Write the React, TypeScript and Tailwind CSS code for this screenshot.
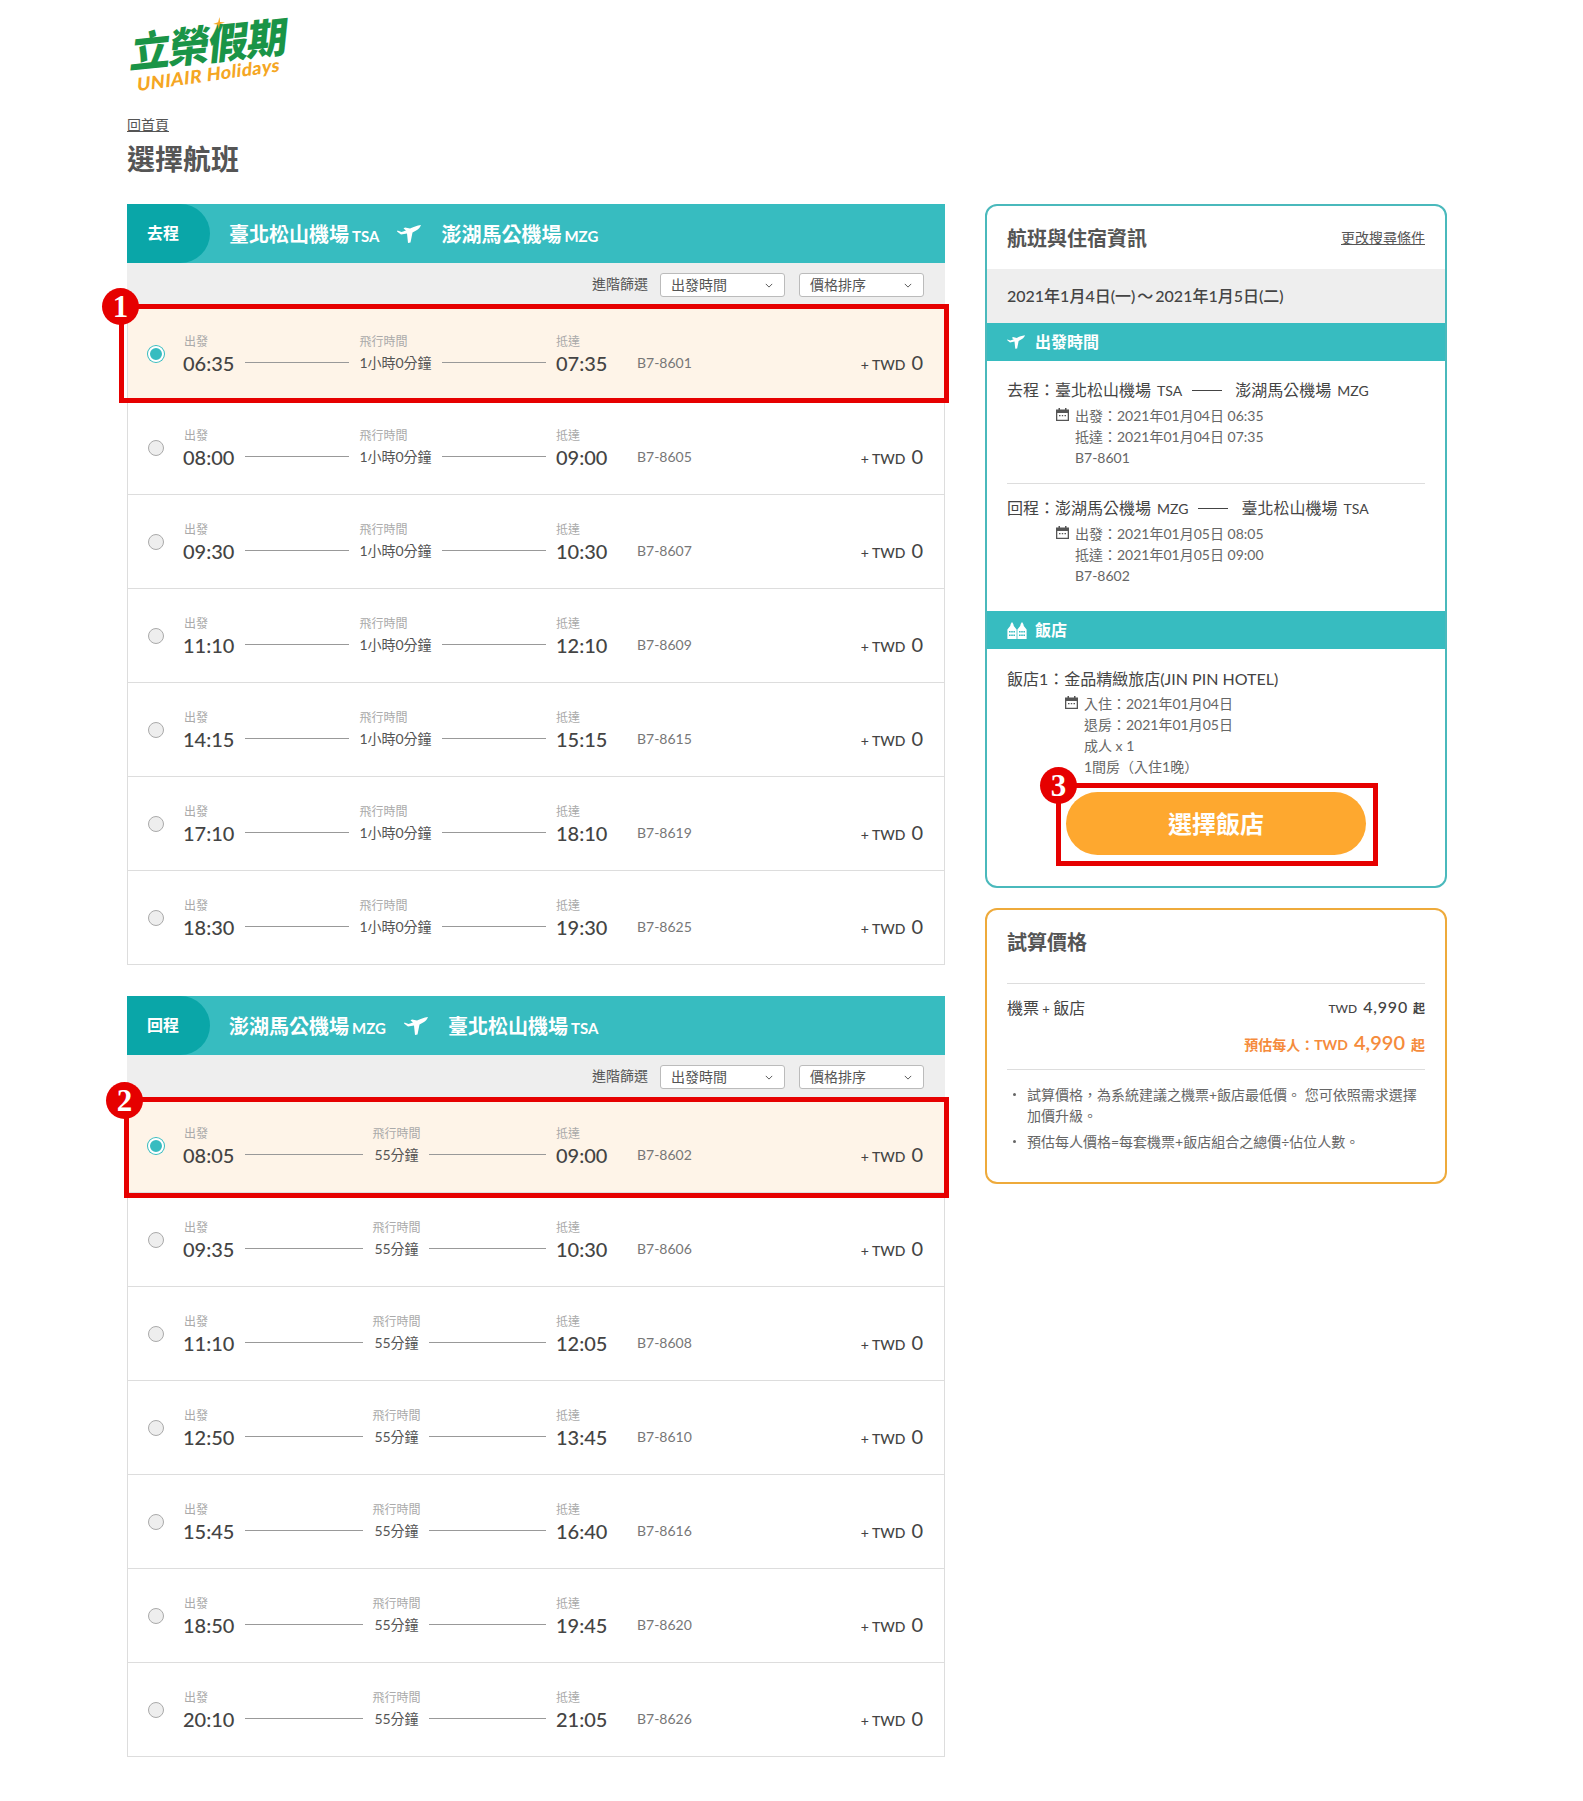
const outbound = [
  ['06:35', '07:35', 'B7-8601'],
  ['08:00', '09:00', 'B7-8605'],
  ['09:30', '10:30', 'B7-8607'],
  ['11:10', '12:10', 'B7-8609'],
  ['14:15', '15:15', 'B7-8615'],
  ['17:10', '18:10', 'B7-8619'],
  ['18:30', '19:30', 'B7-8625'],
]

const inbound = [
  ['08:05', '09:00', 'B7-8602'],
  ['09:35', '10:30', 'B7-8606'],
  ['11:10', '12:05', 'B7-8608'],
  ['12:50', '13:45', 'B7-8610'],
  ['15:45', '16:40', 'B7-8616'],
  ['18:50', '19:45', 'B7-8620'],
  ['20:10', '21:05', 'B7-8626'],
]

function PlaneIcon({ className }: { className: string }) {
  return (
    <svg viewBox="0 0 24 18" className={className} fill="currentColor">
      <path d="M24 0C20 .5 16 2 13 3.6L8 2.4 6.5 3.6 9 5.4 4.5 7 .5 5.6 0 6.4 4 9.6 10 8.4 11 18 13.5 17.5 15.5 7.5 20 5C22 3.8 23.5 1.6 24 0Z" />
    </svg>
  )
}

function HotelIcon({ className }: { className: string }) {
  return (
    <svg viewBox="0 0 20 17" className={className} fill="currentColor">
      <path
        fillRule="evenodd"
        d="M5 0 6.3 2 6.8 4 9.6 7.5V17H.4V7.5L3.2 4 3.7 2ZM15 0 16.3 2 16.8 4 19.6 7.5V17H10.4V7.5L13.2 4 13.7 2ZM2 9V10.6H3.6V9ZM4.2 9V10.6H5.8V9ZM6.4 9V10.6H8V9ZM2 12.4V14H3.6V12.4ZM4.2 12.4V14H5.8V12.4ZM6.4 12.4V14H8V12.4ZM12 9V10.6H13.6V9ZM14.2 9V10.6H15.8V9ZM16.4 9V10.6H18V9ZM12 12.4V14H13.6V12.4ZM14.2 12.4V14H15.8V12.4ZM16.4 12.4V14H18V12.4Z"
      />
    </svg>
  )
}

function CalendarIcon() {
  return (
    <svg viewBox="0 0 13 13" className="w-[13px] h-[13px] text-[#555] shrink-0" fill="currentColor">
      <path
        fillRule="evenodd"
        d="M2.5 0H4V1.5H9V0H10.5V1.5H13V13H0V1.5H2.5ZM1.3 5V11.7H11.7V5ZM3 7H4.5V8.3H3ZM5.8 7H7.2V8.3H5.8ZM8.5 7H10V8.3H8.5Z"
      />
    </svg>
  )
}

function Badge({ n, className }: { n: number; className: string }) {
  return (
    <span
      className={`absolute w-[37px] h-[37px] rounded-full bg-[#e60000] text-white flex items-center justify-center text-[31px] font-bold font-['Liberation_Serif',serif] leading-none ${className}`}
    >
      {n}
    </span>
  )
}

function Code({ children }: { children: string }) {
  return <span className="text-[15px] font-bold ml-[3px]">{children}</span>
}

function FilterSelect({ label }: { label: string }) {
  return (
    <div className="w-[125px] h-[24px] bg-white border border-[#bbb] rounded-[3px] flex items-center justify-between pl-[10px] pr-[11px] text-[14px] text-[#555]">
      <span className="-mt-px">{label}</span>
      <svg viewBox="0 0 10 6" className="w-[8px] h-[5px] text-[#555]" fill="none" stroke="currentColor" strokeWidth="1.2">
        <path d="M1 1l4 4 4-4" />
      </svg>
    </div>
  )
}

function FlightRow({
  flight,
  duration,
  centered,
  selected,
  overlay,
}: {
  flight: string[]
  duration: string
  centered?: boolean
  selected?: boolean
  overlay?: React.ReactNode
}) {
  return (
    <div
      className={`relative h-[94px] border-x border-b border-[#ddd] flex items-center pl-[20px] pr-[21px] ${
        selected ? 'bg-[#fef4e8]' : 'bg-white'
      }`}
    >
      {selected ? (
        <span className="w-[16px] h-[16px] rounded-full bg-[#37bcc0] border-2 border-white ring-1 ring-[#37bcc0] shrink-0" />
      ) : (
        <span className="w-[16px] h-[16px] rounded-full bg-[#eee] border border-[#aaa] shrink-0" />
      )}
      <div className="ml-[20px] w-[423px] flex items-stretch gap-[10px]">
        <div className="w-[51px]">
          <div className="text-[12px] leading-[18px] text-[#aaa]">出發</div>
          <div className="text-[20px] leading-[24px] text-[#444] font-medium whitespace-nowrap -ml-px">{flight[0]}</div>
        </div>
        <div className="flex-1 h-px bg-[#999] self-end mb-[12px]" />
        <div className={centered ? 'text-center -mr-[2px]' : 'text-left'}>
          <div className="text-[12px] leading-[18px] text-[#aaa]">飛行時間</div>
          <div className="text-[14px] leading-[24px] text-[#555] whitespace-nowrap">{duration}</div>
        </div>
        <div className="flex-1 h-px bg-[#999] self-end mb-[12px]" />
        <div className="w-[51px]">
          <div className="text-[12px] leading-[18px] text-[#aaa]">抵達</div>
          <div className="text-[20px] leading-[24px] text-[#444] font-medium whitespace-nowrap">{flight[1]}</div>
        </div>
      </div>
      <div className="ml-[30px] self-end mb-[25px] text-[14px] leading-[24px] text-[#777]">{flight[2]}</div>
      <div className="ml-auto self-end mb-[23px] flex items-baseline text-[#444] leading-[24px]">
        <span className="text-[14px] font-medium mr-[6px]">+ TWD</span>
        <span className="text-[20px]">0</span>
      </div>
      {overlay}
    </div>
  )
}

function FlightSection({
  tag,
  from,
  fromCode,
  to,
  toCode,
  flights,
  duration,
  centered,
  overlay,
}: {
  tag: string
  from: string
  fromCode: string
  to: string
  toCode: string
  flights: string[][]
  duration: string
  centered?: boolean
  overlay: React.ReactNode
}) {
  return (
    <section>
      <div className="h-[59px] bg-[#37bcc0] flex items-center text-white">
        <div className="w-[83px] h-full bg-[#0aa6a8] rounded-r-[30px] flex items-center pl-[20px] pb-[1px] text-[16px] font-bold">
          {tag}
        </div>
        <div className="ml-[19px] text-[20px] font-bold">
          {from}
          <Code>{fromCode}</Code>
        </div>
        <PlaneIcon className="w-[24px] h-[18px] ml-[18px] mr-[20px]" />
        <div className="text-[20px] font-bold">
          {to}
          <Code>{toCode}</Code>
        </div>
      </div>
      <div className="h-[44px] bg-[#eee] flex items-start justify-end pt-[10px] pr-[21px] gap-[14px]">
        <span className="text-[14px] leading-[22px] text-[#555] -mr-[2px]">進階篩選</span>
        <FilterSelect label="出發時間" />
        <FilterSelect label="價格排序" />
      </div>
      {flights.map((f, i) => (
        <FlightRow
          key={f[2]}
          flight={f}
          duration={duration}
          centered={centered}
          selected={i === 0}
          overlay={i === 0 ? overlay : null}
        />
      ))}
    </section>
  )
}

function TripDetail({
  tag,
  from,
  fromCode,
  to,
  toCode,
  lines,
}: {
  tag: string
  from: string
  fromCode: string
  to: string
  toCode: string
  lines: string[]
}) {
  return (
    <div>
      <div className="flex items-center text-[16px] leading-[24px] text-[#444]">
        {tag}：{from}
        <span className="ml-[6px] text-[14px] mt-[2px]">{fromCode}</span>
        <span className="w-[30px] h-px bg-[#444] ml-[10px] mr-[13px]" />
        {to}
        <span className="ml-[6px] text-[14px] mt-[2px]">{toCode}</span>
      </div>
      <div className="flex gap-[6px] mt-[2px] pl-[49px] text-[14px] leading-[21px] text-[#666]">
        <div className="pt-[3px]">
          <CalendarIcon />
        </div>
        <div>
          {lines.map(l => (
            <div key={l}>{l}</div>
          ))}
        </div>
      </div>
    </div>
  )
}

export default function App() {
  return (
    <div className="w-[1583px] h-[1801px] bg-white pl-[127px] font-['Lato','Noto_Sans_CJK_TC',sans-serif] text-[#444]">
      <div className="h-[115px] pt-[27px] pl-[3px]">
        <div className="w-[165px] -rotate-[8deg] -skew-x-[12deg] origin-left relative">
          <div className="text-[41px] leading-[47px] font-black tracking-[-1.5px] text-[#1a9447] whitespace-nowrap rotate-[2deg] origin-left mt-[2px] -mb-[2px]">
            立榮假期
          </div>
          <div className="text-[18px] leading-[22px] font-black text-[#f5a623] whitespace-nowrap pl-[9px] tracking-[0.5px]">
            UNIAIR Holidays
          </div>
          <svg viewBox="0 0 12 12" className="absolute left-[82px] top-[1px] w-[12px] h-[12px] text-[#f5a623]" fill="currentColor">
            <path d="M6 0 7 5 12 6 7 7 6 12 5 7 0 6 5 5Z" />
          </svg>
        </div>
      </div>
      <a className="block text-[14px] leading-[20px] text-[#555] underline w-fit">回首頁</a>
      <h1 className="mt-[4px] text-[28px] leading-[40px] font-bold text-[#555]">選擇航班</h1>
      <div className="mt-[25px] flex items-start gap-[40px]">
        <div className="w-[818px] flex flex-col gap-[31px]">
          <FlightSection
            tag="去程"
            from="臺北松山機場"
            fromCode="TSA"
            to="澎湖馬公機場"
            toCode="MZG"
            flights={outbound}
            duration="1小時0分鐘"
            overlay={
              <div className="absolute z-10 -left-[9px] -right-[5px] -top-[3px] -bottom-[3px] border-[5px] border-[#e60000]">
                <Badge n={1} className="-left-[22px] -top-[21px]" />
              </div>
            }
          />
          <FlightSection
            tag="回程"
            from="澎湖馬公機場"
            fromCode="MZG"
            to="臺北松山機場"
            toCode="TSA"
            flights={inbound}
            duration="55分鐘"
            centered
            overlay={
              <div className="absolute z-10 -left-[4px] -right-[5px] -top-[2px] -bottom-[6px] border-[5px] border-[#e60000]">
                <Badge n={2} className="-left-[23px] -top-[20px]" />
              </div>
            }
          />
        </div>
        <div className="w-[462px] flex flex-col gap-[20px]">
          <div className="h-[684px] border-2 border-[#4ab9bc] rounded-[12px] overflow-hidden">
            <div className="h-[63px] px-[20px] flex items-center justify-between">
              <h2 className="text-[20px] font-bold text-[#555]">航班與住宿資訊</h2>
              <a className="text-[14px] text-[#555] underline">更改搜尋條件</a>
            </div>
            <div className="h-[54px] bg-[#eee] px-[20px] flex items-center text-[16px] font-medium text-[#444]">
              2021年1月4日(一)
              <span className="mx-[2px]">～</span>
              2021年1月5日(二)
            </div>
            <div className="h-[38px] bg-[#37bcc0] px-[20px] flex items-center gap-[10px] text-white text-[16px] font-bold">
              <PlaneIcon className="w-[18px] h-[14px]" />
              出發時間
            </div>
            <div className="px-[20px] pt-[16px]">
              <TripDetail
                tag="去程"
                from="臺北松山機場"
                fromCode="TSA"
                to="澎湖馬公機場"
                toCode="MZG"
                lines={['出發：2021年01月04日 06:35', '抵達：2021年01月04日 07:35', 'B7-8601']}
              />
              <div className="h-px bg-[#ddd] mt-[15px] mb-[11px]" />
              <TripDetail
                tag="回程"
                from="澎湖馬公機場"
                fromCode="MZG"
                to="臺北松山機場"
                toCode="TSA"
                lines={['出發：2021年01月05日 08:05', '抵達：2021年01月05日 09:00', 'B7-8602']}
              />
            </div>
            <div className="mt-[25px] h-[38px] bg-[#37bcc0] px-[20px] flex items-center gap-[8px] text-white text-[16px] font-bold">
              <HotelIcon className="w-[20px] h-[17px] shrink-0" />
              飯店
            </div>
            <div className="px-[20px] pt-[18px]">
              <div className="text-[16px] leading-[24px] text-[#444]">飯店1：金品精緻旅店(JIN PIN HOTEL)</div>
              <div className="flex gap-[6px] mt-[2px] pl-[58px] text-[14px] leading-[21px] text-[#666]">
                <div className="pt-[3px]">
                  <CalendarIcon />
                </div>
                <div>
                  <div>入住：2021年01月04日</div>
                  <div>退房：2021年01月05日</div>
                  <div>成人 x 1</div>
                  <div>1間房（入住1晚）</div>
                </div>
              </div>
              <div className="relative w-[300px] h-[63px] mx-auto mt-[15px]">
                <button className="w-full h-full rounded-full bg-[#fea82f] text-white text-[24px] font-bold">選擇飯店</button>
                <div className="absolute -left-[10px] -right-[12px] -top-[9px] -bottom-[11px] border-[5px] border-[#e60000]">
                  <Badge n={3} className="-left-[21px] -top-[21px]" />
                </div>
              </div>
            </div>
          </div>
          <div className="h-[276px] border-2 border-[#eeaa3b] rounded-[12px] px-[20px]">
            <h2 className="h-[74px] pt-[17px] text-[20px] leading-[30px] font-bold text-[#555] border-b border-[#ddd]">試算價格</h2>
            <div className="flex items-center justify-between mt-[11px] text-[#444] leading-[24px]">
              <span className="text-[16px]">
                機票<span className="text-[13px]"> + </span>飯店
              </span>
              <span className="flex items-baseline">
                <span className="text-[12px] font-medium">TWD</span>
                <span className="text-[16px] font-medium ml-[6px] tracking-[0.8px]">4,990</span>
                <span className="text-[12px] font-bold ml-[5px]">起</span>
              </span>
            </div>
            <div className="flex items-baseline justify-end mt-[6px] text-[#f58b3c] font-bold leading-[30px] h-[36px]">
              <span className="text-[14px]">預估每人：TWD</span>
              <span className="text-[20px] font-semibold ml-[6px]">4,990</span>
              <span className="text-[14px] ml-[6px]">起</span>
            </div>
            <div className="h-px bg-[#ddd] mt-[6px]" />
            <ul className="mt-[14px] text-[14px] leading-[21px] text-[#666] flex flex-col gap-[5px]">
              <li className="relative pl-[20px]">
                <span className="absolute left-[6px] top-[9px] w-[3px] h-[3px] rounded-full bg-[#666]" />
                試算價格，為系統建議之機票+飯店最低價。 您可依照需求選擇加價升級。
              </li>
              <li className="relative pl-[20px]">
                <span className="absolute left-[6px] top-[9px] w-[3px] h-[3px] rounded-full bg-[#666]" />
                預估每人價格=每套機票+飯店組合之總價÷佔位人數。
              </li>
            </ul>
          </div>
        </div>
      </div>
    </div>
  )
}
